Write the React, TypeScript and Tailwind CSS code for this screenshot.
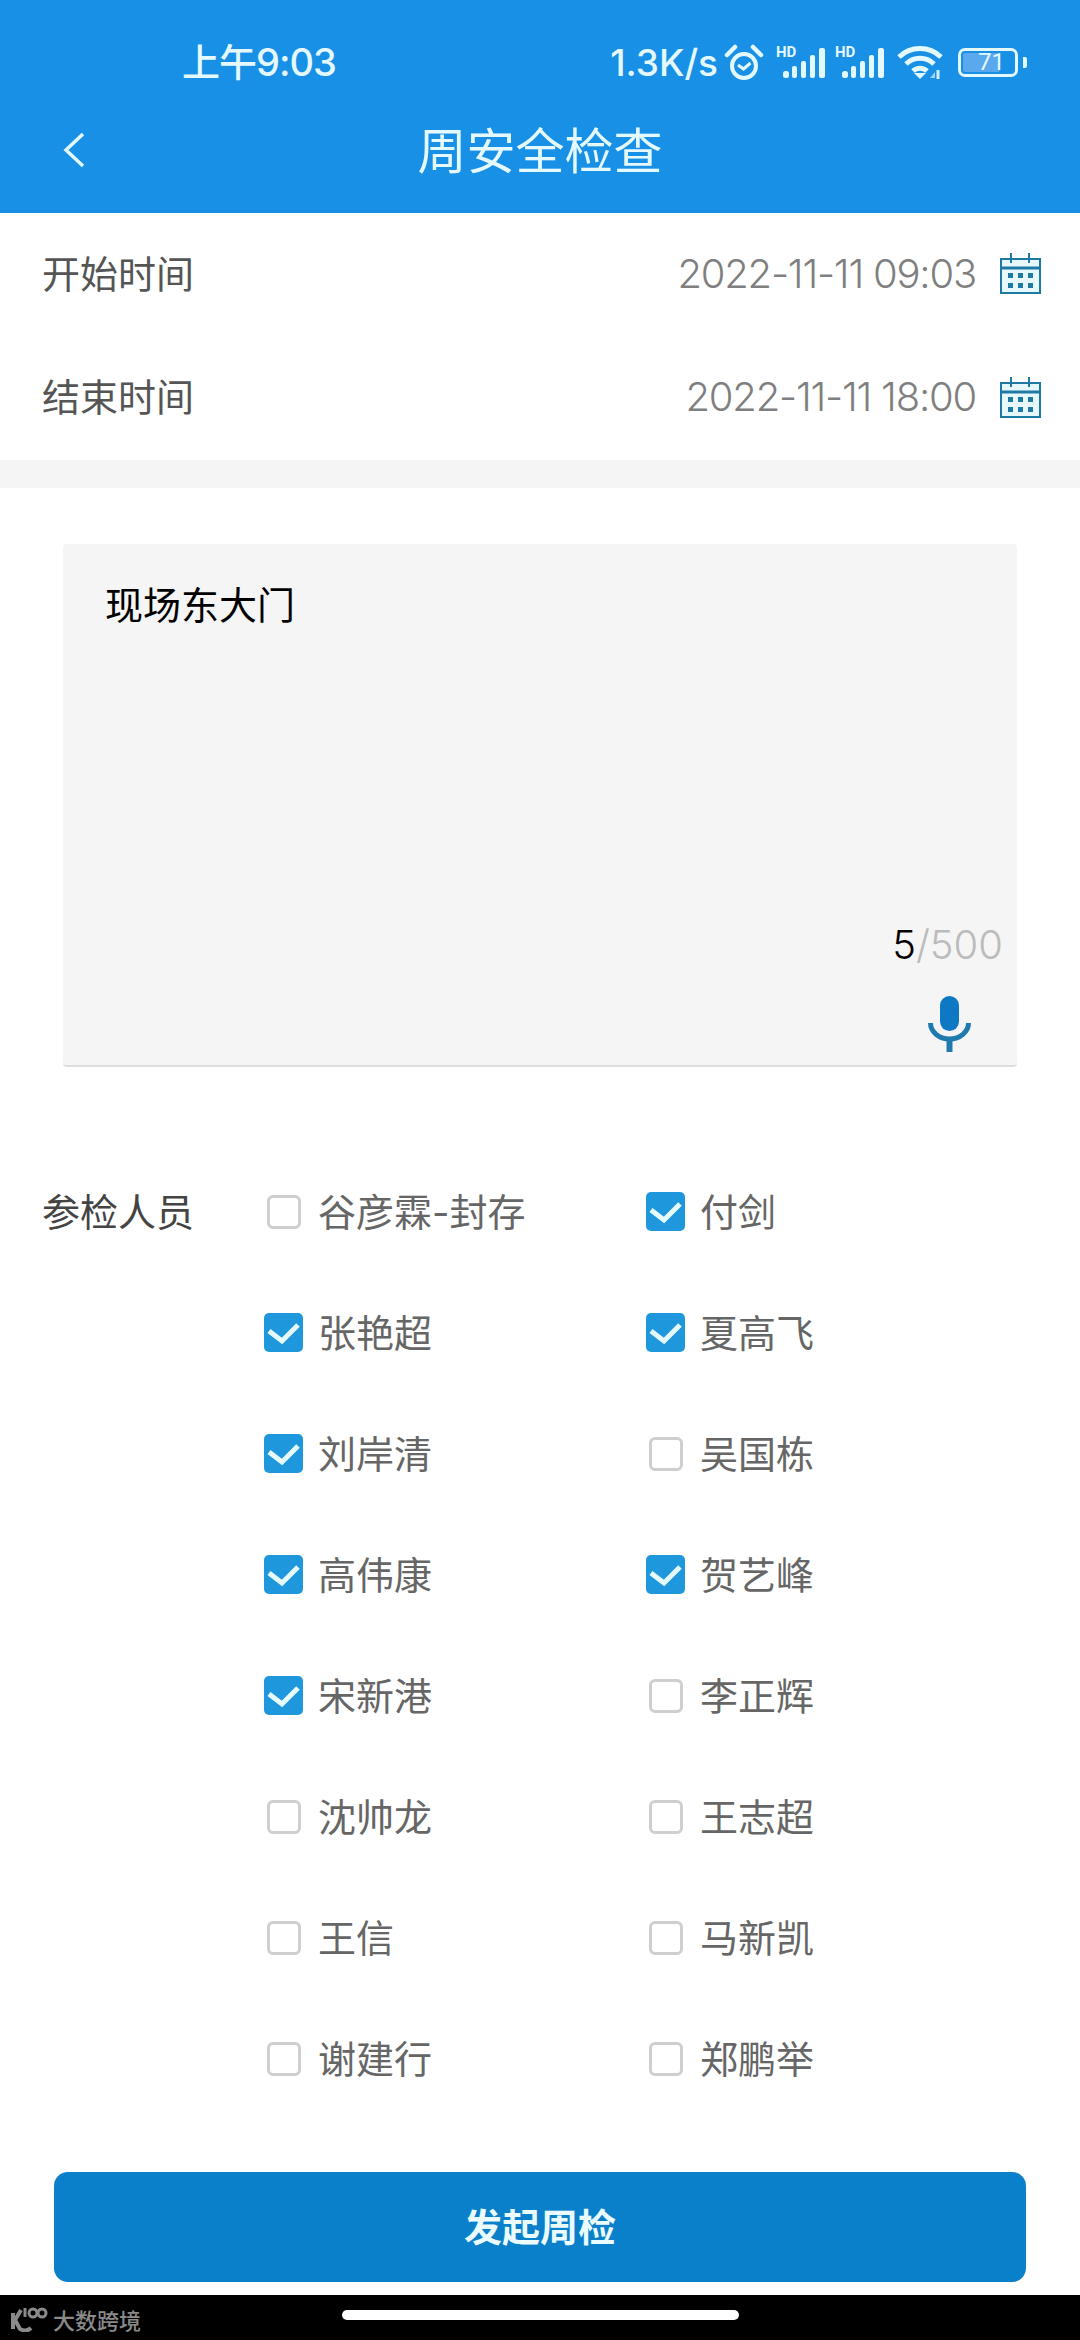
const CJK = "font-['Inter','Noto_Sans_CJK_SC',sans-serif]";

const people = [
  { name: "谷彦霖-封存", checked: false },
  { name: "付剑", checked: true },
  { name: "张艳超", checked: true },
  { name: "夏高飞", checked: true },
  { name: "刘岸清", checked: true },
  { name: "吴国栋", checked: false },
  { name: "高伟康", checked: true },
  { name: "贺艺峰", checked: true },
  { name: "宋新港", checked: true },
  { name: "李正辉", checked: false },
  { name: "沈帅龙", checked: false },
  { name: "王志超", checked: false },
  { name: "王信", checked: false },
  { name: "马新凯", checked: false },
  { name: "谢建行", checked: false },
  { name: "郑鹏举", checked: false },
];

const CalendarIcon = () => (
  <svg width="41" height="41" viewBox="0 0 41 41" fill="#e6f8fc" stroke="#1f7aa3" strokeWidth="2">
    <rect x="1" y="6" width="39" height="34" />
    <path d="M1 15h39" strokeWidth="3" />
    <path d="M11 0v10M29 0v10" />
    <g fill="#1f7aa3" stroke="none">
      <rect x="8" y="20" width="5" height="5" />
      <rect x="18" y="20" width="5" height="5" />
      <rect x="28" y="20" width="5" height="5" />
      <rect x="8" y="30" width="5" height="5" />
      <rect x="18" y="30" width="5" height="5" />
      <rect x="28" y="30" width="5" height="5" />
    </g>
  </svg>
);

const MicIcon = () => (
  <svg width="43" height="56" viewBox="0 0 43 56" fill="none">
    <rect x="12" y="0" width="19" height="35" rx="9.5" fill="#0f78c4" />
    <path d="M2.5 27a19 16 0 0 0 38 0" stroke="#1f7aad" strokeWidth="5" />
    <path d="M21.5 42v14" stroke="#1f7aad" strokeWidth="6" />
  </svg>
);

const AlarmIcon = () => (
  <svg width="40" height="36" viewBox="0 0 40 36" fill="none" stroke="#e4f8ff" strokeWidth="4">
    <circle cx="20" cy="22" r="12" />
    <path d="M3 11 11 3M37 11 29 3" strokeLinecap="round" strokeWidth="4.5" />
    <path d="M14 21l5.500 4 7-6" strokeWidth="3" />
  </svg>
);

const SignalIcon = () => (
  <div className="relative h-[31px] w-[49px]">
    <span className="absolute left-0 top-[-2px] font-['Roboto',sans-serif] text-[15px] leading-[15px] font-bold text-[#e4f8ff]">HD</span>
    <svg className="absolute inset-0" width="49" height="31" viewBox="0 0 49 31" fill="#e4f8ff">
      <rect x="7" y="24" width="6" height="7" rx="2.500" />
      <rect x="16" y="19" width="5" height="12" rx="2" />
      <rect x="25" y="14" width="5" height="17" rx="2" />
      <rect x="34" y="8" width="5" height="23" rx="2" />
      <rect x="43" y="1" width="6" height="30" rx="2" />
    </svg>
  </div>
);

const WifiIcon = () => (
  <svg width="46" height="34" viewBox="0 0 46 34" fill="none" stroke="#e4f8ff" strokeWidth="5">
    <path d="M2 12a30 30 0 0 1 42 0" />
    <path d="M9 19a20 20 0 0 1 28 0" />
    <path d="M16 26a10 10 0 0 1 14 0" />
    <path d="M17 28l6 6 6-6z" fill="#e4f8ff" stroke="none" />
    <path d="M33 33l5-6v6z" fill="#9fd3f3" stroke="none" />
    <path d="M41 25v9" stroke="#cfeefb" strokeWidth="3" />
  </svg>
);

const Battery = () => (
  <div className="flex items-center gap-[5px]">
    <div className="flex h-[29px] w-[60px] items-center rounded-[7px] border-[3px] border-[#e4f8ff] p-[2px]">
      <div className="relative h-full w-[37px] rounded-[2px] bg-[#5aa9ee]">
        <span className="absolute left-[15px] top-[-1px] font-['Roboto',sans-serif] text-[24px] leading-[21px] text-[#e4f8ff]">
          71
        </span>
      </div>
    </div>
    <div className="h-[11px] w-[4px] rounded-r-[2px] bg-[#e4f8ff]" />
  </div>
);

const TimeRow = ({ label, value, heightClass }: { label: string; value: string; heightClass: string }) => (
  <div className={`flex items-center justify-between pl-[42px] pr-[39px] ${heightClass}`}>
    <span className="text-[38px] leading-none text-[#555555]">{label}</span>
    <div className="flex items-center gap-[24px]">
      <span className="text-[40px] leading-none font-light tracking-[-1.2px] text-[#7f7f7f]">{value}</span>
      <CalendarIcon />
    </div>
  </div>
);

const PersonCell = ({ name, checked }: { name: string; checked: boolean }) => (
  <div className="flex h-[121px] items-center">
    <div className="flex w-[39px] justify-center">
      {checked ? (
        <svg width="39" height="39" viewBox="0 0 39 39" fill="none" stroke="#e6fbff" strokeWidth="5">
          <rect width="39" height="39" rx="5" fill="#1f97dc" stroke="none" />
          <path d="M5 18l13 10L34 12" />
        </svg>
      ) : (
        <div className="h-[34px] w-[34px] rounded-[6px] border-[3px] border-[#cfcfcf]" />
      )}
    </div>
    <span className="ml-[15px] text-[38px] leading-none text-[#666666]">{name}</span>
  </div>
);

export default function App() {
  return (
    <div className={`flex h-[2340px] w-[1080px] flex-col bg-white ${CJK}`}>
      <header className="h-[213px] bg-[#1790e6] pt-[30px] text-[#e4f8ff]">
        <div className="flex h-[64px] items-center pl-[182px] pr-[53px]">
          <span className="text-[38px] leading-none font-medium tracking-[-1px]">上午9:03</span>
          <div className="ml-auto flex items-center">
            <span className="mr-[6px] text-[37px] leading-none font-medium">1.3K/s</span>
            <AlarmIcon />
            <div className="ml-[12px] flex items-center gap-[10px]">
              <SignalIcon />
              <SignalIcon />
            </div>
            <div className="ml-[13px]">
              <WifiIcon />
            </div>
            <div className="ml-[15px]">
              <Battery />
            </div>
          </div>
        </div>
        <div className="relative flex h-[114px] items-center justify-center">
          <svg className="absolute left-[62px] top-[38px]" width="24" height="36" viewBox="0 0 24 36" fill="none" stroke="#e4f8ff" strokeWidth="3.5">
            <path d="M21 2 4 18l17 16" />
          </svg>
          <span className="text-[49px] leading-none">周安全检查</span>
        </div>
      </header>

      <TimeRow label="开始时间" value="2022-11-11 09:03" heightClass="h-[121px]" />
      <TimeRow label="结束时间" value="2022-11-11 18:00" heightClass="h-[126px]" />
      <div className="h-[28px] bg-[#f5f5f5]" />

      <div className="mx-[63px] mt-[56px] flex h-[523px] w-[954px] flex-col justify-between rounded-[4px] border-b-2 border-[#dddddd] bg-[#f5f5f5] pt-[42px] pr-[14px] pb-[13px] pl-[42px]">
        <div className="text-[38px] leading-none text-black">现场东大门</div>
        <div className="flex flex-col items-end">
          <div className="text-[40px] leading-none font-light text-[#bbbbbb]">
            <span className="text-black">5</span>/500
          </div>
          <div className="mt-[31px] mr-[32px]">
            <MicIcon />
          </div>
        </div>
      </div>

      <div className="mt-[84px] flex pl-[42px]">
        <div className="flex h-[121px] w-[222px] items-center text-[38px] leading-none text-[#444444]">参检人员</div>
        <div className="grid flex-1 grid-cols-[382px_1fr]">
          {people.map((person) => (
            <PersonCell key={person.name} name={person.name} checked={person.checked} />
          ))}
        </div>
      </div>

      <button className="mx-[54px] mt-[53px] flex h-[110px] items-center justify-center rounded-[14px] bg-[#0a80ca] text-[38px] leading-none font-bold text-[#eafcff]">
        发起周检
      </button>

      <div className="relative mt-[13px] flex flex-1 items-center justify-center bg-black">
        <div className="absolute left-[10px] top-[11px] flex items-end text-[#8a8a8a]">
          <svg width="38" height="26" viewBox="0 0 38 26" fill="none" stroke="#8a8a8a" strokeWidth="3">
            <path d="M3 7v16M11 4 5 14l5 9c4 2 8 2 11-1" strokeWidth="4" />
            <path d="M15 2v9" />
            <circle cx="23" cy="7" r="4" />
            <circle cx="32" cy="7" r="4" />
          </svg>
          <span className="ml-[5px] text-[22px] leading-none font-medium">大数跨境</span>
        </div>
        <div className="mb-[6px] h-[10px] w-[397px] rounded-full bg-white" />
      </div>
    </div>
  );
}
